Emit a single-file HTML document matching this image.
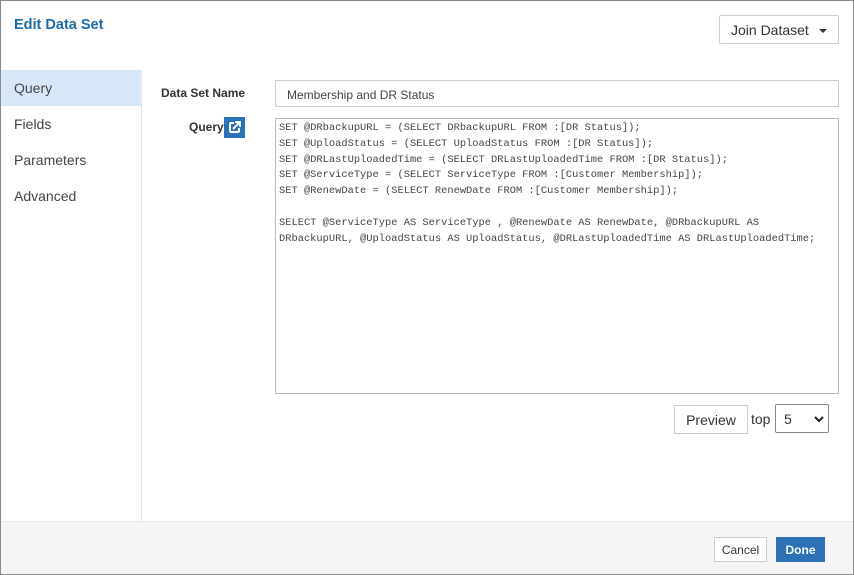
<!DOCTYPE html>
<html><head><style>
*{box-sizing:border-box;margin:0;padding:0}
body{width:854px;height:575px;background:#fff;font-family:"Liberation Sans",sans-serif;position:relative;overflow:hidden}
.frame{position:absolute;left:0;top:0;width:854px;height:575px;border:1px solid #8a8a8a}
.abs{position:absolute}
h1{position:absolute;left:14px;top:17px;font-size:14.5px;font-weight:bold;color:#1a6aa8}
.join{left:719px;top:15px;width:120px;height:29px;border:1px solid #ccc;border-radius:2px;font-size:14px;color:#333;padding:6px 0 0 11px}
.side{left:1px;top:70px;width:141px;height:451px;border-right:1px solid #e6e6e6}
.side div{height:36px;padding:10px 0 0 13px;font-size:14px;color:#444}
.side .act{background:#d7e7f8}
.lbl{font-size:12px;font-weight:bold;color:#333}
.inp{left:275px;top:80px;width:564px;height:27px;border:1px solid #ccc;font-size:12px;color:#444;padding:7px 0 0 11px}
.ta{left:275px;top:118px;width:564px;height:276px;border:1px solid #bbb;font-family:"Liberation Mono",monospace;font-size:10.4px;line-height:15.8px;color:#444;padding:2px 0 0 3px;white-space:pre}
.btn{border:1px solid #ccc;background:#fff;font-size:14px;color:#333;text-align:center}
.foot{left:1px;top:521px;width:852px;height:53px;background:#f5f5f5;border-top:1px solid #e6e6e6}
</style></head><body>
<h1>Edit Data Set</h1>
<div class="abs join">Join Dataset <span style="position:absolute;left:99px;top:13px;border:4px solid transparent;border-top:4px solid #333;border-bottom:0"></span></div>
<div class="abs side"><div class="act">Query</div><div>Fields</div><div>Parameters</div><div>Advanced</div></div>
<div class="abs lbl" style="left:161px;top:86px">Data Set Name</div>
<div class="abs inp">Membership and DR Status</div>
<div class="abs lbl" style="left:189px;top:120px">Query</div>
<div class="abs" style="left:224px;top:117px;width:21px;height:21px;background:#2a73b8">
<svg width="21" height="21" viewBox="0 0 21 21"><path d="M10 6H7a1 1 0 0 0-1 1v7a1 1 0 0 0 1 1h7a1 1 0 0 0 1-1v-3" fill="none" stroke="#fff" stroke-width="2"/><path d="M9 12l6-6M11 5h5v5" fill="none" stroke="#fff" stroke-width="2"/></svg></div>
<div class="abs ta">SET @DRbackupURL = (SELECT DRbackupURL FROM :[DR Status]);
SET @UploadStatus = (SELECT UploadStatus FROM :[DR Status]);
SET @DRLastUploadedTime = (SELECT DRLastUploadedTime FROM :[DR Status]);
SET @ServiceType = (SELECT ServiceType FROM :[Customer Membership]);
SET @RenewDate = (SELECT RenewDate FROM :[Customer Membership]);

SELECT @ServiceType AS ServiceType , @RenewDate AS RenewDate, @DRbackupURL AS
DRbackupURL, @UploadStatus AS UploadStatus, @DRLastUploadedTime AS DRLastUploadedTime;</div>
<div class="abs btn" style="left:674px;top:405px;width:74px;height:29px;padding-top:6px">Preview</div>
<div class="abs" style="left:751px;top:411px;font-size:14px;color:#333">top</div>
<div class="abs" style="left:775px;top:404px;width:54px;height:29px;border:1px solid #888;border-radius:2px;font-size:14px;color:#333;padding:6px 0 0 8px">5
<svg class="abs" style="left:38px;top:10px" width="10" height="8" viewBox="0 0 10 8"><path d="M1 2l4 4 4-4" fill="none" stroke="#222" stroke-width="2"/></svg></div>
<div class="abs foot"></div>
<div class="abs btn" style="left:714px;top:537px;width:53px;height:25px;font-size:12px;padding-top:5px">Cancel</div>
<div class="abs" style="left:776px;top:537px;width:49px;height:25px;background:#2c72b5;color:#fff;font-size:12px;font-weight:bold;text-align:center;padding-top:6px">Done</div>
<div class="frame"></div>
</body></html>
